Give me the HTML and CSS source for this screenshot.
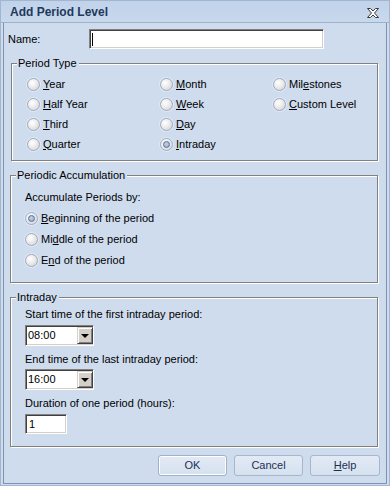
FILE: index.html
```html
<!DOCTYPE html>
<html>
<head>
<meta charset="utf-8">
<link rel="stylesheet" href="styles.css">
</head>
<body>
<div class="dialog">
  <div class="titlebar">
    <span class="title">Add Period Level</span>
    <svg class="close" width="12" height="10" viewBox="0 0 12 10"><polygon points="0.5,0.5 3.5,0.5 6,3 8.5,0.5 11.5,0.5 7.5,5 11.5,9.5 8.5,9.5 6,7 3.5,9.5 0.5,9.5 4.5,5" fill="#fff" stroke="#3a3a3a" stroke-width="1" stroke-linejoin="miter"/></svg>
  </div>
  <div class="client">
    <div class="name-row">
      <span class="name-label">Name:</span>
      <div class="textbox name-box"><span class="caret"></span></div>
    </div>

    <div class="group group-type">
      <span class="legend">Period Type</span>
      <div class="radio-grid">
        <div class="radio"><span class="rb"></span><span><u>Y</u>ear</span></div>
        <div class="radio"><span class="rb"></span><span><u>H</u>alf Year</span></div>
        <div class="radio"><span class="rb"></span><span><u>T</u>hird</span></div>
        <div class="radio"><span class="rb"></span><span><u>Q</u>uarter</span></div>
        <div class="radio"><span class="rb"></span><span><u>M</u>onth</span></div>
        <div class="radio"><span class="rb"></span><span><u>W</u>eek</span></div>
        <div class="radio"><span class="rb"></span><span><u>D</u>ay</span></div>
        <div class="radio"><span class="rb on"></span><span><u>I</u>ntraday</span></div>
        <div class="radio"><span class="rb"></span><span>Mil<u>e</u>stones</span></div>
        <div class="radio"><span class="rb"></span><span><u>C</u>ustom Level</span></div>
      </div>
    </div>

    <div class="group group-acc">
      <span class="legend">Periodic Accumulation</span>
      <div class="text">Accumulate Periods by:</div>
      <div class="acc-list">
        <div class="radio row21"><span class="rb on"></span><span><u>B</u>eginning of the period</span></div>
        <div class="radio row21"><span class="rb"></span><span>Mi<u>d</u>dle of the period</span></div>
        <div class="radio row21"><span class="rb"></span><span>E<u>n</u>d of the period</span></div>
      </div>
    </div>

    <div class="group group-intra">
      <span class="legend">Intraday</span>
      <div class="text">Start time of the first intraday period:</div>
      <div class="textbox combo first-combo"><span class="combo-text">08:00</span><span class="drop"><span class="tri"></span></span></div>
      <div class="text mt6">End time of the last intraday period:</div>
      <div class="textbox combo"><span class="combo-text">16:00</span><span class="drop"><span class="tri"></span></span></div>
      <div class="text mt7">Duration of one period (hours):</div>
      <div class="textbox dur"><span class="combo-text">1</span></div>
    </div>

    <div class="buttons">
      <div class="btn default">OK</div>
      <div class="btn">Cancel</div>
      <div class="btn help"><span><u>H</u>elp</span></div>
    </div>
  </div>
</div>
</body>
</html>
```

FILE: styles.css
```css
html, body {
  margin: 0;
  padding: 0;
  background: #cfdcee;
}

body {
  font-family: "Liberation Sans", Arial, sans-serif;
  font-size: 11px;
  color: #000;
}

.dialog {
  width: 390px;
  height: 486px;
  box-sizing: border-box;
  border: 1px solid #a3b6cf;
  background: #cfdcee;
  display: flex;
  flex-direction: column;
}

.titlebar {
  height: 21px;
  flex: none;
  border-bottom: 1px solid #9db1ca;
  background: linear-gradient(#c1d3ea, #c8d8ed);
  display: flex;
  align-items: center;
  justify-content: space-between;
  padding: 0 10px 0 9px;
}

.title {
  font-weight: bold;
  font-size: 12px;
  color: #1e395b;
  line-height: 14px;
}

.close {
  display: block;
  margin-top: 2px;
}

.client {
  flex: 1;
  margin: 0 2px 1px 2px;
  border: 1px solid #7f93ae;
  border-top: none;
  padding: 6px 7px 0 4px;
}

.name-row {
  display: flex;
  align-items: center;
  height: 20px;
}

.name-label {
  width: 81px;
  line-height: 13px;
}

.textbox {
  box-sizing: border-box;
  border: 1px solid;
  border-color: #808080 #ffffff #ffffff #808080;
  box-shadow: inset 1px 1px 0 #404040, inset -1px -1px 0 #d4d0c8;
  background: #fff;
}

.name-box {
  width: 235px;
  height: 20px;
  display: flex;
  align-items: center;
  padding-left: 2px;
}

.caret {
  width: 1px;
  height: 13px;
  background: #000;
}

.group {
  position: relative;
  box-sizing: border-box;
  border: 1px solid #808080;
  box-shadow: inset 1px 1px 0 #fff, 1px 1px 0 #fff;
}

.legend {
  position: absolute;
  top: -7px;
  left: 5px;
  padding: 0 2px 0 1px;
  background: #cfdcee;
  line-height: 13px;
  white-space: nowrap;
}

.group-type {
  margin: 14px 0 0 3px;
  width: 367px;
  height: 98px;
  padding: 10px 0 0 15px;
}

.radio-grid {
  display: grid;
  grid-template-columns: 133px 113px auto;
  grid-template-rows: repeat(4, 20px);
  grid-auto-flow: column;
}

.radio {
  display: flex;
  align-items: center;
  height: 20px;
  line-height: 13px;
  white-space: nowrap;
}

.radio.row21 {
  height: 21px;
}

.rb {
  width: 13px;
  height: 13px;
  flex: none;
  box-sizing: border-box;
  border-radius: 50%;
  border: 1px solid #a2adbf;
  background: radial-gradient(circle at 38% 35%, #ffffff 0%, #eeeeee 40%, #cdcdcd 100%);
  box-shadow: 0 0 0 1px rgba(235, 242, 252, 0.55);
  margin-right: 3px;
  display: flex;
  align-items: center;
  justify-content: center;
}

.rb.on::after {
  content: "";
  width: 7px;
  height: 7px;
  box-sizing: border-box;
  border-radius: 50%;
  border: 1px solid #53719c;
  background: radial-gradient(circle at 45% 40%, #c4d4ea 0%, #8aa5cb 100%);
}

u {
  text-decoration: underline;
  text-underline-offset: 1px;
}

.group-acc {
  margin: 14px 0 0 2px;
  width: 368px;
  height: 108px;
  padding: 15px 0 0 14px;
}

.text {
  line-height: 13px;
  white-space: nowrap;
}

.acc-list {
  margin-top: 4px;
}

.group-intra {
  margin: 14px 0 0 2px;
  width: 368px;
  height: 150px;
  padding: 10px 0 0 14px;
}

.combo {
  width: 69px;
  height: 21px;
  margin-top: 3px;
  padding: 1px 0 1px 1px;
  display: flex;
  align-items: stretch;
}

.first-combo {
  margin-top: 4px;
}

.combo-text {
  flex: 1;
  line-height: 17px;
  padding-left: 1px;
}

.drop {
  width: 16px;
  flex: none;
  box-sizing: border-box;
  background: #d4d0c8;
  border: 1px solid;
  border-color: #d4d0c8 #404040 #404040 #d4d0c8;
  box-shadow: inset 1px 1px 0 #fff, inset -1px -1px 0 #808080;
  display: flex;
  align-items: center;
  justify-content: center;
}

.tri {
  width: 0;
  height: 0;
  border-left: 4px solid transparent;
  border-right: 4px solid transparent;
  border-top: 4px solid #000;
  margin-top: 1px;
}

.mt6 {
  margin-top: 7px;
}

.mt7 {
  margin-top: 7px;
}

.dur {
  width: 42px;
  height: 20px;
  margin-top: 4px;
  padding: 2px 0 0 2px;
  display: flex;
}

.dur .combo-text {
  line-height: 15px;
}

.buttons {
  margin: 8px -1px 0 0;
  display: flex;
  justify-content: flex-end;
  gap: 7px;
}

.btn {
  width: 69px;
  height: 21px;
  box-sizing: border-box;
  border: 1px solid #a6b6cc;
  border-radius: 3px;
  background: linear-gradient(#e2eaf5, #d6e1ef);
  color: #1b3153;
  display: flex;
  align-items: center;
  justify-content: center;
  line-height: 13px;
}

.btn.default {
  box-shadow: inset 0 0 0 1px #ffffff;
  border-color: #9fb1c9;
}

.btn.help {
  width: 70px;
}
```
